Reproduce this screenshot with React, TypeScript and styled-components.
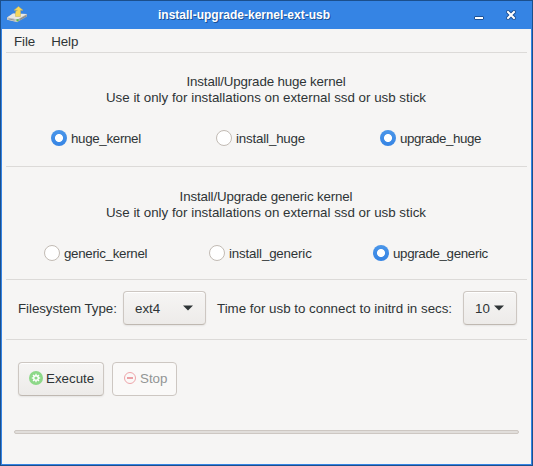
import React from "react";
import styled, { createGlobalStyle, css } from "styled-components";

const GlobalStyle = createGlobalStyle`
  * { box-sizing: border-box; }
  body {
    margin: 0;
    overflow: hidden;
    font: 13.333px/16px "Liberation Sans", Arial, sans-serif;
    color: #2e3436;
  }
`;

const Window = styled.div`
  display: flex;
  flex-direction: column;
  width: 533px;
  height: 466px;
  background: #f6f5f4;
  border: 1px solid #1b4f8c;
  box-shadow: inset 0 0 0 1px #3584e4;
`;

const TitleBar = styled.header`
  display: grid;
  grid-template-columns: 30px 1fr 73px;
  align-items: center;
  height: 28px;
  background: #3584e4;
`;

const Title = styled.h1`
  margin: 0;
  padding-left: 127px;
  font-size: 12px;
  line-height: 16px;
  font-weight: bold;
  color: #fff;
  text-shadow: 1px 1px 0 #1b5197;
  white-space: nowrap;
`;

const AppIcon = styled.svg`
  display: block;
  margin: 0 0 0 5px;
`;

const WindowControls = styled.div`
  display: flex;
  justify-content: flex-end;
  padding-right: 16px;
  gap: 22px;
  svg { display: block; }
`;

const Content = styled.main`
  display: flex;
  flex-direction: column;
  margin: 0 5px;
`;

const MenuBar = styled.nav`
  display: flex;
  gap: 16px;
  height: 23px;
  padding: 5px 8px 0;
  letter-spacing: -0.08px;
`;

const Section = styled.section<{ $height: number }>`
  height: ${(p) => p.$height}px;
  border-top: 1px solid #dcdad8;
`;

const Description = styled.p<{ $top: number }>`
  margin: 0;
  padding: ${(p) => p.$top}px 1px 0 0;
  text-align: center;
`;

const Tracked = styled.span<{ $spacing: number }>`
  letter-spacing: ${(p) => p.$spacing}px;
`;

const RadioRow = styled.div<{ $start: number }>`
  display: grid;
  grid-template-columns: 165px 164px 1fr;
  margin-top: 24px;
  padding-left: ${(p) => p.$start}px;
`;

const RadioLabel = styled.label`
  display: flex;
  gap: 4px;
  height: 16px;
  line-height: 18px;
  white-space: nowrap;
`;

const RadioMark = styled.span<{ $checked: boolean }>`
  flex: none;
  width: 16px;
  height: 16px;
  border-radius: 50%;
  background: #fff;
  border: 1px solid #c2bbb4;
  ${(p) =>
    p.$checked &&
    css`
      border: none;
      background: radial-gradient(circle, #fff 3.6px, transparent 4.4px),
        linear-gradient(#4b96e9, #3584e4);
    `}
`;

const OptionsRow = styled.div`
  display: flex;
  align-items: center;
  padding: 11px 8px 0 12px;
`;

const OptionLabel = styled.span<{ $width: number; $spacing: number }>`
  width: ${(p) => p.$width}px;
  padding-top: 2px;
  letter-spacing: ${(p) => p.$spacing}px;
  white-space: nowrap;
`;

const Button = styled.button<{ $width: number }>`
  display: flex;
  flex: none;
  align-items: center;
  width: ${(p) => p.$width}px;
  height: 34px;
  padding: 0 9px 0 10px;
  border: 1px solid #cdc7c2;
  border-bottom-color: #bfb8b1;
  border-radius: 4px;
  background: linear-gradient(#f6f5f4, #edebe9);
  box-shadow: inset 0 1px #fff, 0 1px 2px rgba(0, 0, 0, 0.07);
  font: inherit;
  color: #2e3436;
  &:disabled {
    border-color: #cdc7c2;
    background: #faf9f8;
    box-shadow: none;
    color: #929595;
  }
`;

const Dropdown = styled(Button)`
  justify-content: space-between;
  padding: 0 12px 0 11px;
`;

const DropdownValue = styled.span`
  padding-top: 2px;
`;

const OptionDropdown = styled(Dropdown)<{ $gap: number }>`
  margin-right: ${(p) => p.$gap}px;
`;

const ActionRow = styled.div`
  display: flex;
  gap: 8px;
  padding: 22px 12px 0;
`;

const ActionIcon = styled.svg`
  flex: none;
  margin: 0 3px 2px 0;
`;

const Progress = styled.div`
  height: 4px;
  margin: 34px 8px 0;
  border: 1px solid #cdc7c2;
  border-radius: 2px;
  background: #e1dedb;
`;

const Arrow = () => (
  <svg width="10" height="6" viewBox="0 0 10 6">
    <path d="M0 .5h10L5 5.5z" fill="#2e3436" />
  </svg>
);

const DriveIcon = () => (
  <AppIcon width="22" height="18" viewBox="0 0 22 18">
    <path d="M1 11.5 7 7.5l14 .5v2.5l-9.5 5.5L1 13.6z" fill="#a7a8a6" />
    <path d="m1 11.5 6-4 14 .5-9.5 5.5z" fill="#e7e7e5" />
    <path d="m1 11.5 10.5 2v2.7L1 13.8z" fill="#c9cac8" />
    <path d="m2.5 12.9 6 1.2" stroke="#999" />
    <path d="M14 13.4 20 10" stroke="#888b89" />
    <rect x="10.5" y="13.2" width="2" height="2" fill="#53b94d" />
    <path d="M9.5 10.5V7c0-1.7 1-2.7 2-2.7H8L12.5.5 17 4.3h-2.5v6.2z" fill="#f6d85b" stroke="#c6b35d" strokeWidth=".5" />
  </AppIcon>
);

const gearAngles = [0, 45, 90, 135, 180, 225, 270, 315];

const GearIcon = () => (
  <ActionIcon width="14" height="14" viewBox="0 0 14 14">
    <circle cx="7" cy="7" r="7" fill="#8dd888" />
    <circle cx="7" cy="7" r="2.3" fill="none" stroke="#fff" strokeWidth="1.4" />
    {gearAngles.map((angle) => (
      <path key={angle} d="M7 2.8v1.6" stroke="#fff" strokeWidth="1.3" transform={`rotate(${angle} 7 7)`} />
    ))}
  </ActionIcon>
);

const StopIcon = () => (
  <ActionIcon width="14" height="14" viewBox="0 0 14 14">
    <circle cx="7" cy="7" r="5.5" fill="none" stroke="#eea5aa" />
    <path d="M4 7h6" stroke="#eba0a5" strokeWidth="2" />
  </ActionIcon>
);

type RadioProps = { label: string; checked?: boolean; spacing?: number };

const Radio = ({ label, checked = false, spacing = 0 }: RadioProps) => (
  <RadioLabel>
    <RadioMark $checked={checked} />
    <Tracked $spacing={spacing}>{label}</Tracked>
  </RadioLabel>
);

export default function App() {
  return (
    <>
      <GlobalStyle />
      <Window>
        <TitleBar>
          <DriveIcon />
          <Title>install-upgrade-kernel-ext-usb</Title>
          <WindowControls>
            <svg width="10" height="10" viewBox="0 0 10 10">
              <rect x=".5" y="6.5" width="9" height="3" rx=".5" fill="#fff" stroke="#1b5197" />
            </svg>
            <svg width="10" height="10" viewBox="0 0 10 10">
              <path d="m2 2 6 6m0-6L2 8" stroke="#1b5197" strokeWidth="4" strokeLinecap="square" />
              <path d="m2 2 6 6m0-6L2 8" stroke="#fff" strokeWidth="2" strokeLinecap="square" />
            </svg>
          </WindowControls>
        </TitleBar>
        <Content>
          <MenuBar>
            <span>File</span>
            <span>Help</span>
          </MenuBar>
          <Section $height={114}>
            <Description $top={21}>
              <Tracked $spacing={-0.15}>Install/Upgrade huge kernel</Tracked>
              <br />
              Use it only for installations on external ssd or usb stick
            </Description>
            <RadioRow $start={45}>
              <Radio label="huge_kernel" checked spacing={-0.32} />
              <Radio label="install_huge" spacing={-0.17} />
              <Radio label="upgrade_huge" checked spacing={-0.41} />
            </RadioRow>
          </Section>
          <Section $height={113}>
            <Description $top={22}>
              <Tracked $spacing={-0.14}>Install/Upgrade generic kernel</Tracked>
              <br />
              Use it only for installations on external ssd or usb stick
            </Description>
            <RadioRow $start={38}>
              <Radio label="generic_kernel" spacing={-0.3} />
              <Radio label="install_generic" spacing={-0.17} />
              <Radio label="upgrade_generic" checked spacing={-0.34} />
            </RadioRow>
          </Section>
          <Section $height={60}>
            <OptionsRow>
              <OptionLabel $width={105} $spacing={-0.06}>Filesystem Type:</OptionLabel>
              <OptionDropdown $width={83} $gap={11}>
                <DropdownValue>ext4</DropdownValue>
                <Arrow />
              </OptionDropdown>
              <OptionLabel $width={246} $spacing={0}>Time for usb to connect to initrd in secs:</OptionLabel>
              <Dropdown $width={54}>
                <DropdownValue>10</DropdownValue>
                <Arrow />
              </Dropdown>
            </OptionsRow>
          </Section>
          <Section $height={95}>
            <ActionRow>
              <Button $width={86}>
                <GearIcon />
                Execute
              </Button>
              <Button $width={65} disabled>
                <StopIcon />
                Stop
              </Button>
            </ActionRow>
            <Progress />
          </Section>
        </Content>
      </Window>
    </>
  );
}
